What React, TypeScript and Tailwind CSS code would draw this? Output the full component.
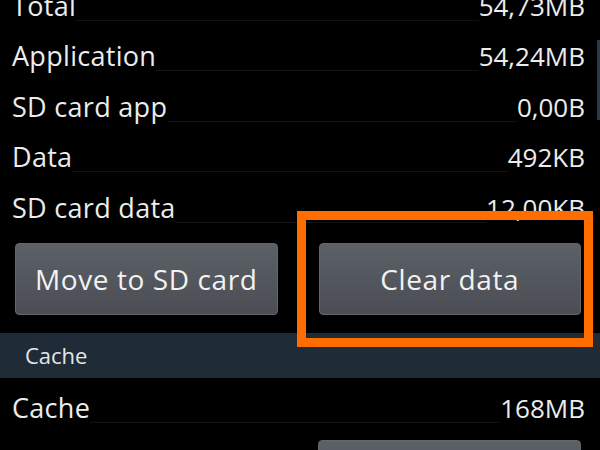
import React from "react";

const rows = [
  { label: "Total", value: "54,73MB" },
  { label: "Application", value: "54,24MB" },
  { label: "SD card app", value: "0,00B" },
  { label: "Data", value: "492KB" },
  { label: "SD card data", value: "12,00KB" },
];

const font = { fontFamily: '"Open Sans", "Noto Sans", sans-serif' };

const Row: React.FC<{ label: string; value: string; height: string }> = ({ label, value, height }) => (
  <div className={`flex items-end pl-[12px] pr-[15px] ${height}`}>
    <span className="text-[27px] leading-[30px] tracking-[0.3px] text-[#ececec] whitespace-nowrap">{label}</span>
    <div className="flex-1 h-px bg-[#121212]" />
    <span className="text-[26px] leading-[30px] text-[#ececec] whitespace-nowrap">{value}</span>
  </div>
);

const Button: React.FC<{ label: string; className?: string }> = ({ label, className }) => (
  <div
    className={`flex h-[72px] items-center justify-center rounded-[4px] border border-[#62676d] bg-gradient-to-b from-[#5c6167] to-[#4a4e54] text-[28px] tracking-[0.6px] text-[#f2f2f2] ${className ?? ""}`}
  >
    {label}
  </div>
);

export default function App() {
  return (
    <div className="relative h-[450px] w-[600px] overflow-hidden bg-black" style={font}>
      <div className="-mt-[30px]">
        {rows.map((r) => (
          <Row key={r.label} label={r.label} value={r.value} height="h-[50.5px]" />
        ))}
      </div>

      <div className="mt-[20px] flex gap-[41px] pl-[15px] pr-[19px]">
        <Button label="Move to SD card" className="flex-1" />
        <Button label="Clear data" className="flex-1" />
      </div>

      <div className="mt-[18px] flex h-[45px] items-center bg-[#1f2c38] pl-[25px]">
        <span className="text-[22px] text-[#e6e6e6]">Cache</span>
      </div>

      <Row label="Cache" value="168MB" height="h-[45px]" />

      <div className="mt-[17px] flex pr-[19px] pl-[318px]">
        <Button label="Clear cache" className="flex-1" />
      </div>

      {/* scrollbar */}
      <div className="absolute right-0 top-[40px] h-[80px] w-[3px] bg-[#2b3948]" />

      {/* highlight box */}
      <div className="absolute left-[297px] top-[211px] h-[136px] w-[296px] border-[9px] border-[#ff6d00]" />
    </div>
  );
}
